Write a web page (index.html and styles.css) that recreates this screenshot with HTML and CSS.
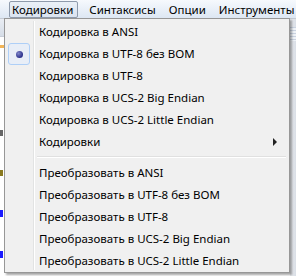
FILE: index.html
```html
<!DOCTYPE html>
<html>
<head>
<meta charset="utf-8">
<link rel="stylesheet" href="styles.css">
</head>
<body>
<div class="window">
  <div class="menubar">
    <div class="mb-item active">Кодировки</div>
    <div class="mb-item">Синтаксисы</div>
    <div class="mb-item">Опции</div>
    <div class="mb-item">Инструменты</div>
  </div>
  <div class="client">
    <div class="editor">
      <div class="toolbar"></div>
      <div class="tabline"></div>
      <div class="etext">
        <div class="mark w"></div>
        <div class="mark g"></div>
        <div class="mark n"></div>
        <div class="mark n"></div>
      </div>
    </div>
    <div class="scrollbar"><div class="thumb"></div></div>
  </div>
  <div class="popup">
    <div class="gutter-line"></div>
    <div class="item">Кодировка в ANSI</div>
    <div class="item checked"><span class="radio"><span class="dot"></span></span>Кодировка в UTF-8 без BOM</div>
    <div class="item">Кодировка в UTF-8</div>
    <div class="item">Кодировка в UCS-2 Big Endian</div>
    <div class="item">Кодировка в UCS-2 Little Endian</div>
    <div class="item sub">Кодировки<span class="arrow"></span></div>
    <div class="sep"></div>
    <div class="item">Преобразовать в ANSI</div>
    <div class="item">Преобразовать в UTF-8 без BOM</div>
    <div class="item">Преобразовать в UTF-8</div>
    <div class="item">Преобразовать в UCS-2 Big Endian</div>
    <div class="item">Преобразовать в UCS-2 Little Endian</div>
  </div>
</div>
</body>
</html>
```
FILE: styles.css
```css
html, body {
  margin: 0;
  padding: 0;
}
body {
  width: 296px;
  height: 276px;
  overflow: hidden;
  background: #fff;
  font-family: "Noto Sans", "DejaVu Sans", sans-serif;
  font-size: 11.5px;
  color: #000;
}
.window {
  position: relative;
  width: 296px;
  height: 276px;
}
.menubar {
  height: 19px;
  display: flex;
  align-items: center;
  padding-left: 9px;
  background: linear-gradient(#f6f9fd, #dde7f3);
  border-bottom: 1px solid #c4cad3;
  box-sizing: border-box;
  gap: 5px;
  font-size: 11.5px;
}
.mb-item {
  height: 17px;
  line-height: 15px;
  padding: 0 4px 0 2px;
  border: 1px solid transparent;
  border-radius: 2px;
  box-sizing: border-box;
  white-space: nowrap;
}
.mb-item.active {
  border-color: #8e9aab;
  background: linear-gradient(#eaf0f7, #dae3ef);
  margin-right: 3px;
}
.client {
  display: flex;
  height: 257px;
}
.editor {
  flex: 1;
  background: #fff;
  display: flex;
  flex-direction: column;
}
.toolbar {
  height: 17px;
  background: linear-gradient(#e9edf3, #d6dde7);
  border-bottom: 1px solid #c8ced8;
}
.tabline {
  height: 3px;
  margin-top: 8px;
  background: #f3b557;
}
.etext {
  display: flex;
  flex-direction: column;
  padding-top: 82px;
  gap: 34px;
}
.mark {
  width: 3px;
  height: 6px;
}
.mark.w { background: #666; }
.mark.g { background: #8a7a20; }
.mark.n { background: #1a1aff; border-bottom: 1px solid #1a1aff; }
.scrollbar {
  width: 6px;
  background: linear-gradient(90deg, #eceef1, #d9dee6);
  padding-top: 8px;
  box-sizing: border-box;
}
.thumb {
  height: 14px;
  background: repeating-linear-gradient(#c9d2e0 0 1px, #eef2f7 1px 3px);
}
.popup {
  position: absolute;
  left: 4px;
  top: 18px;
  width: 286px;
  height: 255px;
  box-sizing: border-box;
  border: 1px solid #979797;
  background: #f0f0f0;
  padding: 2px 2px;
  box-shadow: 2px 2px 2px rgba(0,0,0,0.35);
  font-size: 11.5px;
}
.gutter-line {
  position: absolute;
  left: 28px;
  top: 2px;
  bottom: 2px;
  width: 1px;
  background: #e2e3e3;
  border-right: 1px solid #fff;
}
.item {
  position: relative;
  height: 22px;
  line-height: 22px;
  padding-left: 32px;
  white-space: nowrap;
}
.radio {
  position: absolute;
  left: 1px;
  top: 0;
  width: 22px;
  height: 22px;
  box-sizing: border-box;
  border: 1px solid #aecff7;
  border-radius: 3px;
  background: #e8eef7;
  display: flex;
  align-items: center;
  justify-content: center;
}
.dot {
  width: 7px;
  height: 7px;
  border-radius: 50%;
  background: radial-gradient(circle at 35% 35%, #7f86c9, #2a2f8a 70%);
}
.arrow {
  position: absolute;
  right: 10px;
  top: 7px;
  width: 0;
  height: 0;
  border-top: 4px solid transparent;
  border-bottom: 4px solid transparent;
  border-left: 4px solid #222;
}
.sep {
  height: 9px;
  margin-left: 30px;
  position: relative;
}
.sep::after {
  content: "";
  position: absolute;
  left: 0;
  right: 1px;
  top: 3px;
  height: 1px;
  background: #e0e0e0;
  border-bottom: 1px solid #fff;
}
```
